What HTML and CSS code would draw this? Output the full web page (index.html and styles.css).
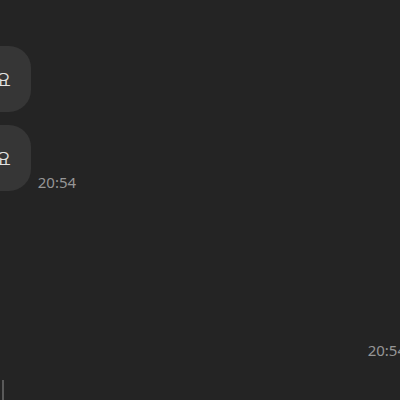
FILE: index.html
```html
<!DOCTYPE html>
<html>
    <head>
        <link rel="stylesheet" href="styles.css">
    </head>
    <body>
        <section class="chat">
            <div class="row">
                <div class="bubble">요</div>
            </div>
            <div class="row">
                <div class="bubble">요</div>
                <span class="time">20:54</span>
            </div>
            <div class="row mine">
                <span class="time">20:54</span>
            </div>
            <div class="row">
                <div class="edge"></div>
            </div>
        </section>
    </body>
</html>
```

FILE: styles.css
```css
body{
    margin: 0;
    background-color: #242424;
    font-family: "Noto Sans CJK KR", "Noto Sans", sans-serif;
    overflow: hidden;
}

.chat{
    width: 400px;
    height: 400px;
    padding-top: 46px;
    box-sizing: border-box;
    display: flex;
    flex-direction: column;
    gap: 13px;
    overflow: hidden;
}

.row{
    display: flex;
    align-items: flex-end;
    gap: 7px;
}

.bubble{
    margin-left: -24px;
    padding: 22px 20px 22px 20px;
    line-height: 22px;
    font-size: 16px;
    color: #e2e2e2;
    background-color: #363636;
    border-radius: 22px;
}

.time{
    font-family: "Noto Sans", sans-serif;
    font-size: 15px;
    line-height: 16px;
    color: #969696;
    margin-bottom: 1px;
}

.mine{
    justify-content: flex-end;
    margin-top: 138px;
    margin-right: -6px;
}

.edge{
    margin-top: 8px;
    width: 2px;
    height: 20px;
    margin-left: 2px;
    background-color: #5a5a5a;
}
```
